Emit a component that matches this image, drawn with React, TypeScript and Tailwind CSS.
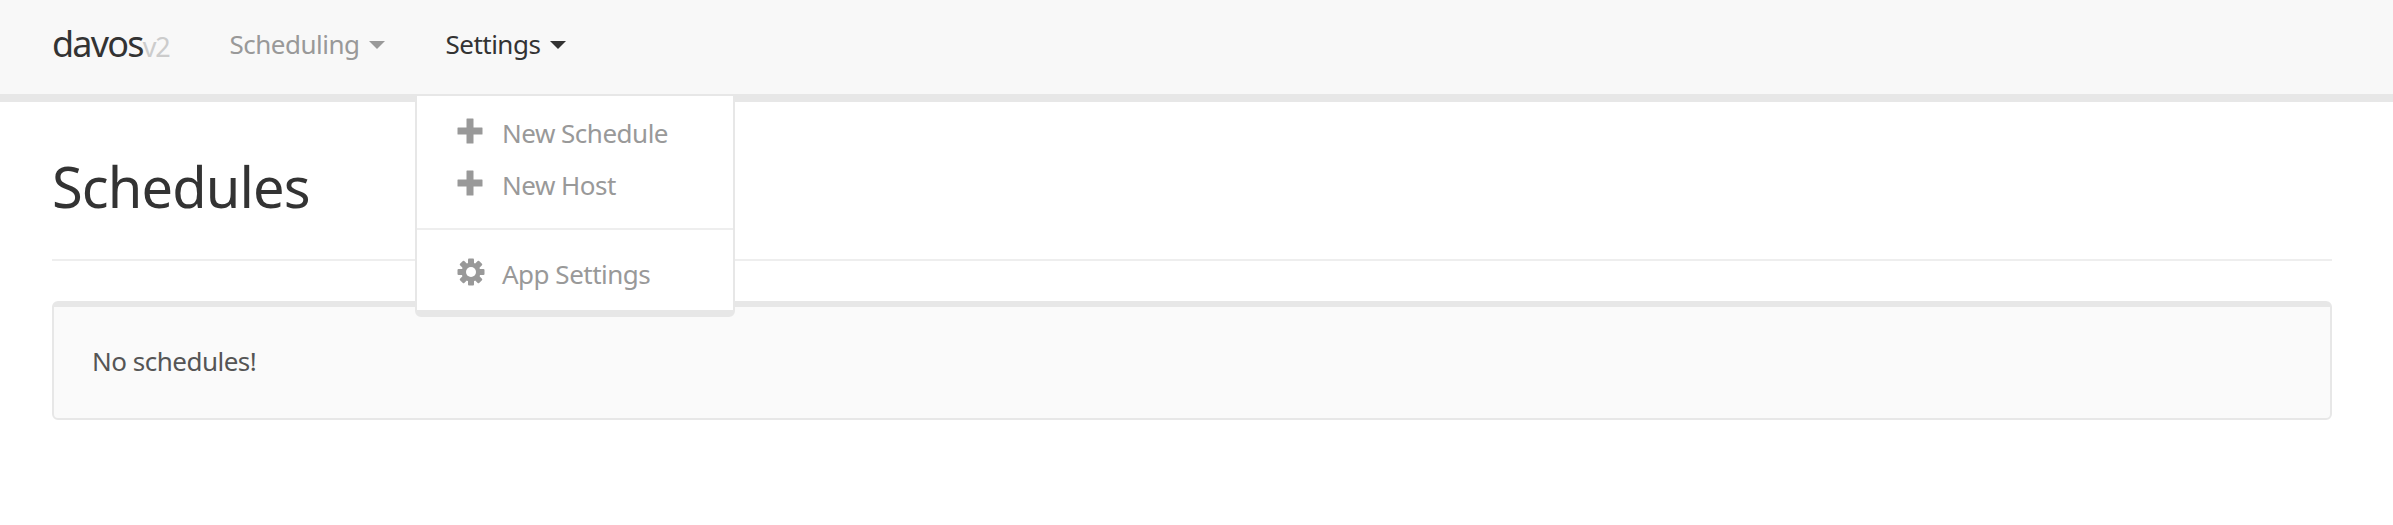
import type { ReactNode } from "react";

function Caret({ className }: { className: string }) {
  return <span className={`inline-block ml-[10px] mt-[2px] w-0 h-0 border-x-[8px] border-x-transparent border-t-[8px] ${className}`} />;
}

function PlusIcon() {
  return (
    <svg viewBox="0 0 26 26" className="w-[26px] h-[26px] fill-[#999]">
      <path d="M9.500 1a.500.500 0 0 1 .500-.500h6a.500.500 0 0 1 .500.500v8.500H25a.500.500 0 0 1 .500.500v6a.500.500 0 0 1-.500.500h-8.500V25a.500.500 0 0 1-.500.500h-6a.500.500 0 0 1-.500-.500v-8.500H1a.500.500 0 0 1-.500-.500v-6A.500.500 0 0 1 1 9.500h8.500z" />
    </svg>
  );
}

function GearIcon() {
  const teeth = [0, 45, 90, 135];
  return (
    <svg viewBox="0 0 28 28" className="w-[28px] h-[28px]">
      {teeth.map((deg) => (
        <rect key={deg} x="11" y="0.500" width="6" height="27" rx="1" fill="#999" transform={`rotate(${deg} 14 14)`} />
      ))}
      <circle cx="14" cy="14" r="9.500" fill="#999" />
      <circle cx="14" cy="14" r="5" fill="#fff" />
    </svg>
  );
}

function MenuItem({ icon, label }: { icon: ReactNode; label: string }) {
  return (
    <div className="flex items-center h-[52px] pl-[40px] text-[#999] text-[26px] tracking-[-0.5px]">
      <span className="w-[45px] flex items-center mb-[4px]">{icon}</span>
      {label}
    </div>
  );
}

export default function App() {
  return (
    <div className="min-h-[525px] bg-white text-[#333] font-['Noto_Sans','Open_Sans',sans-serif] relative">
      <nav className="h-[102px] bg-[#f8f8f8] border-b-[8px] border-[#e7e7e7] flex items-center pl-[52px] pb-[6px] text-[26px] tracking-[-0.5px]">
        <span className="text-[36px] tracking-[-1.8px]">
          davos<span className="text-[27px] tracking-[-1.2px] text-[#ccc]">v2</span>
        </span>
        <span className="ml-[60px] text-[#999] flex items-center">
          Scheduling
          <Caret className="border-t-[#999]" />
        </span>
        <span className="ml-[60px] text-[#333] flex items-center">
          Settings
          <Caret className="border-t-[#333]" />
        </span>
      </nav>

      <div className="absolute left-[415px] top-[94px] w-[320px] h-[223px] bg-white border-x-2 border-t-2 border-b-[7px] border-[#e7e7e7] rounded-b-md pt-[11px]">
        <MenuItem icon={<PlusIcon />} label="New Schedule" />
        <MenuItem icon={<PlusIcon />} label="New Host" />
        <div className="h-[2px] bg-[#eee] mt-[17px] mb-[18px]" />
        <MenuItem icon={<GearIcon />} label="App Settings" />
      </div>

      <main className="pl-[52px] pr-[61px] pt-[52px]">
        <h1 className="text-[56px] tracking-[-0.9px] leading-[64px] pb-[41px] border-b-2 border-[#eee]">Schedules</h1>
        <div className="mt-[40px] h-[119px] bg-[#fafafa] border-2 border-t-[6px] border-[#e7e7e7] rounded-md flex items-center px-[38px] pb-[2px] text-[26px] tracking-[-0.5px] text-[#555]">
          No schedules!
        </div>
      </main>
    </div>
  );
}
